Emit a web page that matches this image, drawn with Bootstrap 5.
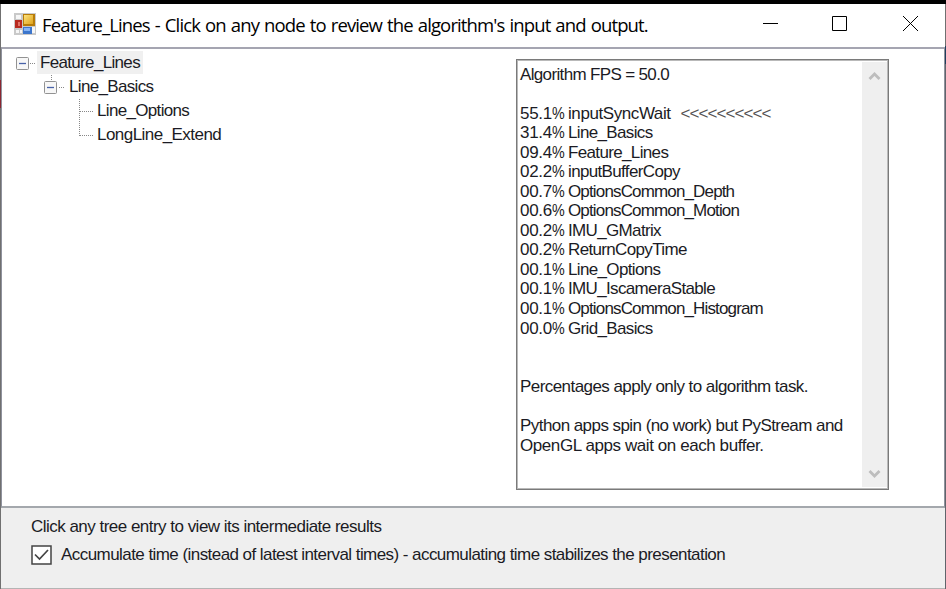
<!DOCTYPE html>
<html lang="en">
<head>
<meta charset="utf-8">
<title>Feature_Lines</title>
<meta name="viewport" content="width=device-width, initial-scale=1">
<link href="https://cdn.jsdelivr.net/npm/bootstrap@5.3.0/dist/css/bootstrap.min.css" rel="stylesheet">
<style>
body{height:589px;overflow:hidden;background:#fff;color:#1b1b24;font-family:"Liberation Sans",Arial,sans-serif;font-size:17px;letter-spacing:-.56px;border-top:4px solid #000}
.win{height:585px;padding:0 1px;background:linear-gradient(#707070 76px,#8b2630 76px,#8b2630 104px,#707070 104px) 0 0/1px 100% no-repeat,linear-gradient(#707070 42px,#1f3d5c 42px,#1f3d5c 60px,#60646b 60px) 100% 0/1px 100% no-repeat,#fff}
.titlebar{height:43px;padding-left:13px}
.titlebar h1{font:400 18.5px/27px "Open Sans","Noto Sans",sans-serif;letter-spacing:-.87px;word-spacing:1.05px;color:#000;margin:0 0 3px 6px}
.caption-btns svg{width:70px;height:38px}
.pane{height:461px;border:1px solid #8f929d;border-width:2px 1px 2px 1px;border-top-color:#a5a5b1;border-bottom-color:#a4a8ad}
.tree{width:514px;padding:2px 0 0 14px}
.tree .node{height:24px;line-height:24px}
.tree .lbl{padding:0 3px;line-height:23px;height:23px;letter-spacing:-.67px}
.tree .long{letter-spacing:-.54px}
.tree .sel{background:#f0f0f0}
.output{width:373px;height:431px;margin-top:10px;border:1px solid #7a7a7a;box-shadow:inset 0 0 0 1px #b9b9b9}
.report{line-height:19.54px;padding:4.6px 0 0 3px;white-space:pre}
.report .rw{height:19.54px;letter-spacing:-.65px}
.report .pct{width:48px;letter-spacing:-.3px}
.report .pct i{font-style:normal;display:inline-block;transform:scaleX(.84);transform-origin:0 50%}
.report .opt{letter-spacing:-.85px}
.report .sync{letter-spacing:-.42px}
.report .arrows{letter-spacing:-.93px;margin-left:10px;color:#555}
.report .note{height:19.54px;letter-spacing:-.56px}
.report .last{letter-spacing:-.42px}
.sbar{width:25px;background:#efefef;margin:2px 1px 2px 0}
.foot{height:81px;background:#efefef;border-bottom:1px solid #b4b4b4;padding:7px 0 0 30px}
.foot p{line-height:23px;margin:0;letter-spacing:-.52px}
.chk{width:21px;height:20px;margin-right:9px}
</style>
<script src="https://cdn.jsdelivr.net/npm/bootstrap@5.3.0/dist/js/bootstrap.bundle.min.js" defer></script>
</head>
<body>
<div class="win d-flex flex-column">
  <header class="titlebar d-flex align-items-center flex-shrink-0">
    <svg width="22" height="22" viewBox="0 0 22 22" class="flex-shrink-0 mb-1">
      <defs><linearGradient id="gy" x2="1" y2="1"><stop stop-color="#fce27c"/><stop offset="1" stop-color="#e0a41c"/></linearGradient></defs>
      <path fill="#c9c9c9" d="M0 0h22v22H0z"/><path fill="#f6f6f6" d="M2 2h5v4H2zM2 17h3v3H2zM6 17h2v3H6zM18 14h3v6h-3z"/>
      <path fill="#b82a20" d="M1 7h7v8H1z"/><path fill="#e27368" d="M4 9h2v4H4z"/>
      <path fill="#b87c08" d="M9 1h12v12H9z"/><path fill="url(#gy)" d="M10 2h9v9h-9z"/>
      <path fill="#3d76cc" d="M9 14h9v7H9z"/><path fill="#86b4f4" d="M10 15h6v3h-6z"/>
    </svg>
    <h1 class="text-nowrap">Feature_Lines - Click on any node to review the algorithm's input and output.</h1>
    <div class="caption-btns d-flex ms-auto mb-1">
      <svg viewBox="0 0 70 38"><path d="M28 18.500h15" stroke="#000"/></svg>
      <svg viewBox="0 0 70 38"><path d="M27.500 11.500h14v14h-14z" fill="none" stroke="#000"/></svg>
      <svg viewBox="0 0 70 38"><path d="M28 11l15 15M43 11l-15 15" stroke="#000"/></svg>
    </div>
  </header>
  <main class="pane d-flex flex-shrink-0">
    <div class="tree flex-shrink-0">
      <div class="node d-flex"><svg width="21" height="24"><rect x=".5" y="6.500" width="12" height="12" rx="1" fill="#f7f7f7" stroke="#929292"/><path d="M3 12.500h7" stroke="#4862a8" stroke-width="1.300"/><path d="M14 12.500h6" stroke="#888" stroke-dasharray="1 1"/></svg><span class="lbl sel">Feature_Lines</span></div>
      <div class="node d-flex"><svg width="50" height="24"><path d="M35.500 0v6M43 12.500h6" stroke="#888" stroke-dasharray="1 1"/><rect x="28.500" y="6.500" width="12" height="12" rx="1" fill="#f7f7f7" stroke="#929292"/><path d="M31 12.500h7" stroke="#4862a8" stroke-width="1.300"/></svg><span class="lbl">Line_Basics</span></div>
      <div class="node d-flex"><svg width="78" height="24"><path d="M63.500 0v24M64 12.500h13" stroke="#888" stroke-dasharray="1 1"/></svg><span class="lbl">Line_Options</span></div>
      <div class="node d-flex"><svg width="78" height="24"><path d="M63.500 0v13M64 12.500h13" stroke="#888" stroke-dasharray="1 1"/></svg><span class="lbl long">LongLine_Extend</span></div>
    </div>
    <div class="output d-flex justify-content-between">
      <div class="report"><div class="rw">Algorithm FPS = 50.0</div><div class="rw"></div><div class="rw d-flex"><span class="pct">55.1<i>%</i></span><span class="sync">inputSyncWait</span><span class="arrows">&lt;&lt;&lt;&lt;&lt;&lt;&lt;&lt;&lt;&lt;</span></div><div class="rw d-flex"><span class="pct">31.4<i>%</i></span><span>Line_Basics</span></div><div class="rw d-flex"><span class="pct">09.4<i>%</i></span><span>Feature_Lines</span></div><div class="rw d-flex"><span class="pct">02.2<i>%</i></span><span>inputBufferCopy</span></div><div class="rw d-flex"><span class="pct">00.7<i>%</i></span><span class="opt">OptionsCommon_Depth</span></div><div class="rw d-flex"><span class="pct">00.6<i>%</i></span><span class="opt">OptionsCommon_Motion</span></div><div class="rw d-flex"><span class="pct">00.2<i>%</i></span><span>IMU_GMatrix</span></div><div class="rw d-flex"><span class="pct">00.2<i>%</i></span><span>ReturnCopyTime</span></div><div class="rw d-flex"><span class="pct">00.1<i>%</i></span><span>Line_Options</span></div><div class="rw d-flex"><span class="pct">00.1<i>%</i></span><span>IMU_IscameraStable</span></div><div class="rw d-flex"><span class="pct">00.1<i>%</i></span><span class="opt">OptionsCommon_Histogram</span></div><div class="rw d-flex"><span class="pct">00.0<i>%</i></span><span>Grid_Basics</span></div><div class="rw"></div><div class="rw"></div><div class="note">Percentages apply only to algorithm task.</div><div class="note"></div><div class="note">Python apps spin (no work) but PyStream and</div><div class="note last">OpenGL apps wait on each buffer.</div></div>
      <div class="sbar d-flex flex-column justify-content-between align-items-center">
        <svg width="13" height="26"><path d="M1.500 17l5-5 5 5" fill="none" stroke="#bdbdbd" stroke-width="2.800"/></svg>
        <svg width="13" height="26"><path d="M1.500 10l5 5 5-5" fill="none" stroke="#bdbdbd" stroke-width="2.800"/></svg>
      </div>
    </div>
  </main>
  <footer class="foot flex-shrink-0">
    <p>Click any tree entry to view its intermediate results</p>
    <label class="d-flex align-items-center mt-1"><svg class="chk" viewBox="0 0 21 20"><path d="M1 1h19v18H1z" fill="#fff" stroke="#444" stroke-width="1.500"/><path d="M4 9.500l4.500 4.500L17 5" fill="none" stroke="#444" stroke-width="1.700"/></svg><span>Accumulate time (instead of latest interval times) - accumulating time stabilizes the presentation</span></label>
  </footer>
</div>
</body>
</html>
